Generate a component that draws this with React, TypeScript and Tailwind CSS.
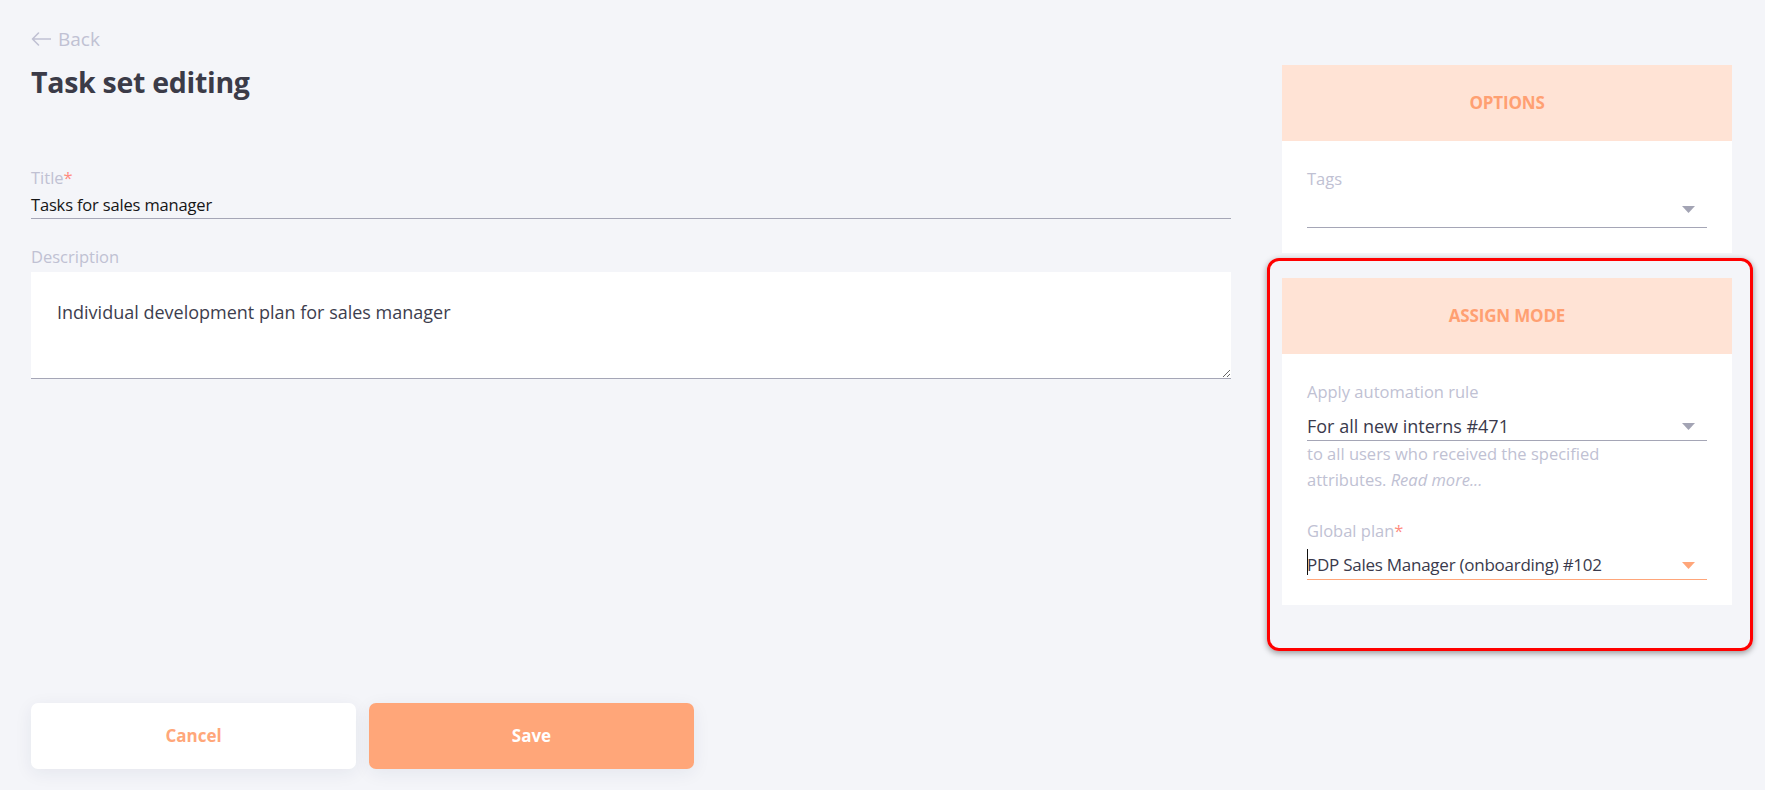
import React from "react";

const font = { fontFamily: '"Open Sans", "Noto Sans", sans-serif' };

function Caret({ color }: { color: string }) {
  return (
    <svg width="13" height="7" viewBox="0 0 13 7" className="shrink-0">
      <path d="M0 0 H13 L6.5 7 Z" fill={color} />
    </svg>
  );
}

function Select({
  label,
  required,
  value,
  active,
  cursor,
  high,
  small,
}: {
  label: string;
  required?: boolean;
  value?: string;
  active?: boolean;
  cursor?: boolean;
  high?: boolean;
  small?: boolean;
}) {
  return (
    <div>
      <div className="text-[16.5px] leading-[24px] text-[#c0c1d3]">
        {label}
        {required && <span className="text-[#ff8c80]">*</span>}
      </div>
      <div
        className={`mt-[10px] flex items-center justify-between pb-[2px] border-b ${
          active ? "border-[#ffa67a]" : "border-[#a5a6b6]"
        }`}
      >
        <div
          className={`relative h-[24px] leading-[24px] text-[#3a3a4c] whitespace-nowrap ${
            small ? "text-[17px] tracking-[-0.015em]" : "text-[18px]"
          }`}
        >
          {cursor && (
            <span className="absolute left-0 top-[-4px] h-[26px] w-px bg-[#111]" />
          )}
          {value}
        </div>
        <div className={`mr-[12px] ${high ? "mt-[-8px]" : "mt-[0px]"}`}>
          <Caret color={active ? "#ffa67a" : "#a3a4b4"} />
        </div>
      </div>
    </div>
  );
}

function CardHeader({ title }: { title: string }) {
  return (
    <div className="h-[76px] bg-[#ffe3d5] flex items-center justify-center">
      <span className="text-[17px] font-bold tracking-[-0.01em] text-[#ffa072]">
        {title}
      </span>
    </div>
  );
}

export default function App() {
  return (
    <div
      className="w-[1765px] h-[790px] bg-[#f4f5f9] flex pl-[31px] pr-[33px] gap-[51px] pt-[25px] overflow-hidden"
      style={font}
    >
      {/* Left column */}
      <div className="flex-1 flex flex-col">
        <div className="flex items-center gap-[7px] h-[28px] text-[#c0c1d3]">
          <svg width="20" height="14" viewBox="0 0 20 14" fill="none">
            <path
              d="M19.5 7H1.5M7.5 1L1.5 7L7.5 13"
              stroke="#c0c1d3"
              strokeWidth="1.6"
              strokeLinecap="round"
              strokeLinejoin="round"
            />
          </svg>
          <span className="text-[19px] leading-[28px]">Back</span>
        </div>
        <h1 className="mt-[9px] text-[28.5px] leading-[40px] font-bold text-[#3b3b48] tracking-[-0.01em]">
          Task set editing
        </h1>

        <div className="mt-[64px] text-[16.5px] leading-[24px] text-[#c0c1d3]">
          Title<span className="text-[#ff8c80]">*</span>
        </div>
        <div className="mt-[3px] h-[26px] border-b border-[#a5a6b6] text-[16.5px] tracking-[-0.01em] leading-[24px] text-[#161616]">
          Tasks for sales manager
        </div>

        <div className="mt-[26px] text-[16.5px] leading-[24px] text-[#c0c1d3]">
          Description
        </div>
        <textarea
          readOnly
          defaultValue="Individual development plan for sales manager"
          className="mt-[3px] h-[107px] w-full bg-white border-0 border-b border-[#a5a6b6] pl-[26px] pt-[28px] text-[18px] leading-[24px] text-[#3d3e4e] outline-none"
          style={font}
        />

        <div className="mt-[324px] flex gap-[13px]">
          <button className="w-[325px] h-[66px] rounded-[7px] bg-white text-[#ffa77a] text-[17px] font-bold shadow-[0_4px_18px_rgba(30,40,80,0.07)]">
            Cancel
          </button>
          <button className="w-[325px] h-[66px] rounded-[7px] bg-[#ffa679] text-white text-[17px] font-bold shadow-[0_4px_18px_rgba(30,40,80,0.07)]">
            Save
          </button>
        </div>
      </div>

      {/* Right column */}
      <div className="w-[450px] pt-[40px] flex flex-col">
        <div>
          <CardHeader title="OPTIONS" />
          <div className="bg-white px-[25px] pt-[26px] pb-[25px]">
            <Select label="Tags" high />
          </div>
        </div>

        <div className="mt-[5px] ml-[-15px] mr-[-21px] border-[3px] border-[#ff0000] rounded-[12px] pt-[17px] pl-[12px] pr-[18px] pb-[43px] shadow-[0_2px_6px_rgba(0,0,0,0.4)]">
          <CardHeader title="ASSIGN MODE" />
          <div className="bg-white px-[25px] pt-[26px] pb-[25px]">
            <Select label="Apply automation rule" value="For all new interns #471" />
            <div className="text-[16.5px] leading-[26px] text-[#c0c1d3]">
              to all users who received the specified
              <br />
              attributes. <span className="italic">Read more...</span>
            </div>
            <div className="mt-[26px]">
              <Select
                label="Global plan"
                required
                value="PDP Sales Manager (onboarding) #102"
                active
                cursor
                small
              />
            </div>
          </div>
        </div>
      </div>
    </div>
  );
}
